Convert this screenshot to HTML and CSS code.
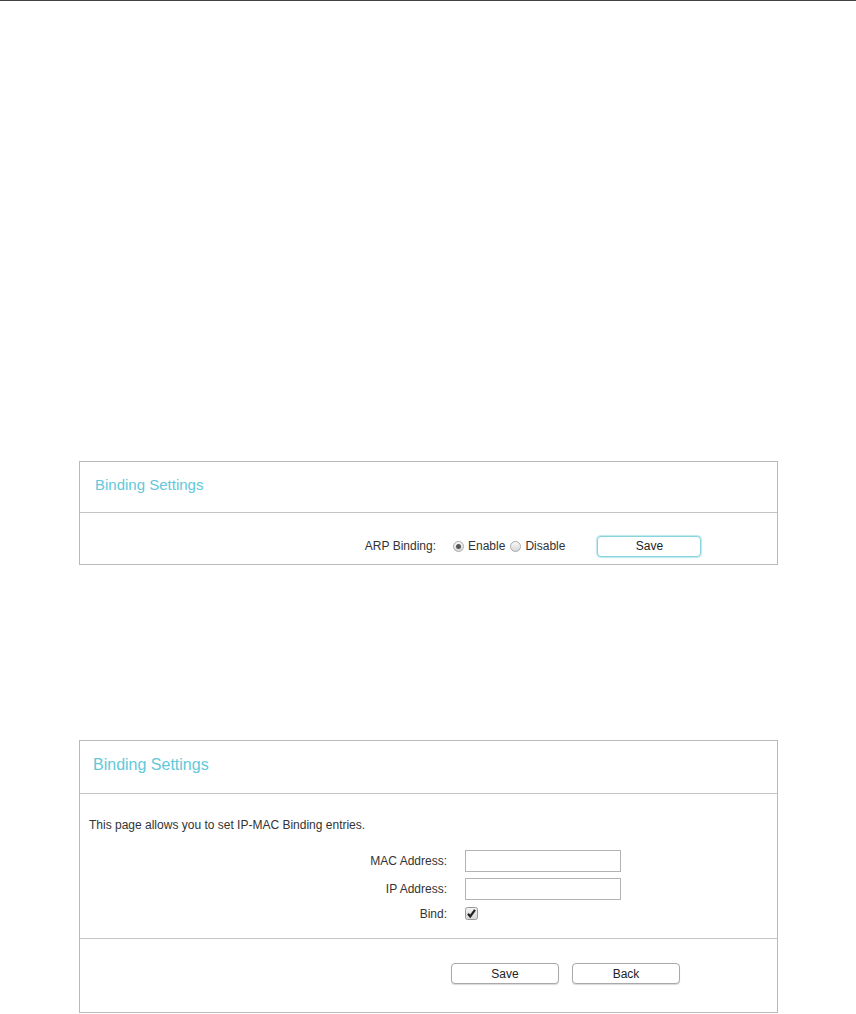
FILE: index.html
```html
<!DOCTYPE html>
<html lang="en">
<head>
  <meta charset="UTF-8">
  <title>Binding Settings</title>
  <link rel="stylesheet" href="styles.css">
</head>
<body>
  <div class="topline"></div>

  <!-- ARP binding switch -->
  <div class="panel panel-arp">
    <div class="panel-head">
      <h2 class="title">Binding Settings</h2>
    </div>
    <div class="panel-body arp-row">
      <span class="label">ARP Binding:</span>
      <span class="radio checked"></span><span class="opt">Enable</span>
      <span class="radio"></span><span class="opt">Disable</span>
      <button class="btn btn-focus">Save</button>
    </div>
  </div>

  <!-- Add entry -->
  <div class="panel panel-entry">
    <div class="panel-head">
      <h2 class="title title-lg">Binding Settings</h2>
    </div>
    <div class="panel-body entry-body">
      <p class="intro">This page allows you to set IP-MAC Binding entries.</p>
      <div class="form">
        <label class="label">MAC Address:</label>
        <input type="text" class="field">
        <label class="label">IP Address:</label>
        <input type="text" class="field">
        <label class="label">Bind:</label>
        <span class="check">
          <svg width="13" height="13" viewBox="0 0 13 13">
            <defs>
              <linearGradient id="cb" x1="0" y1="0" x2="0" y2="1">
                <stop offset="0" stop-color="#f4f4f4"/>
                <stop offset="1" stop-color="#d6d6d6"/>
              </linearGradient>
            </defs>
            <rect x="0.5" y="0.5" width="12" height="12" rx="2" fill="url(#cb)" stroke="#9a9a9a"/>
            <path d="M3 6.8 L5.2 9.4 L10 2.8" fill="none" stroke="#222" stroke-width="2.2"/>
          </svg>
        </span>
      </div>
    </div>
    <div class="panel-foot">
      <button class="btn">Save</button>
      <button class="btn">Back</button>
    </div>
  </div>
</body>
</html>
```

FILE: styles.css
```css
body {
  margin: 0;
  font-family: "Liberation Sans", Arial, sans-serif;
  font-size: 12px;
  color: #333;
  background: #fff;
}
.topline {
  height: 1px;
  background: #444;
}
.panel {
  width: 699px;
  box-sizing: border-box;
  margin-left: 79px;
  border: 1px solid #b9b9b9;
}
.panel-arp {
  margin-top: 460px;
}
.panel-entry {
  margin-top: 175px;
}
.panel-head {
  border-bottom: 1px solid #c4c4c4;
  display: flex;
  align-items: center;
  box-sizing: border-box;
}
.panel-arp .panel-head {
  height: 51px;
  padding: 0 0 5px 15px;
}
.panel-entry .panel-head {
  height: 53px;
  padding: 0 0 5px 13px;
}
.title {
  margin: 0;
  font-weight: normal;
  font-size: 15px;
  color: #62c8da;
}
.title-lg {
  font-size: 16px;
}
.label {
  text-align: right;
}
.arp-row {
  height: 51px;
  box-sizing: border-box;
  display: flex;
  align-items: center;
  padding-top: 15px;
}
.arp-row .label {
  width: 356px;
  margin-right: 17px;
}
.radio {
  width: 9px;
  height: 9px;
  border: 1px solid #aaa;
  border-radius: 50%;
  background: linear-gradient(#f8f8f8, #d8d8d8);
  position: relative;
  margin-right: 4px;
}
.radio.checked::after {
  content: "";
  position: absolute;
  left: 2px;
  top: 2px;
  width: 5px;
  height: 5px;
  border-radius: 50%;
  background: #555;
}
.opt {
  margin-right: 5px;
}
.btn {
  width: 108px;
  height: 21px;
  padding: 0;
  font-family: "Liberation Sans", Arial, sans-serif;
  font-size: 12px;
  color: #222;
  background: #fff;
  border: 1px solid #a9a9a9;
  border-radius: 4px;
  box-shadow: 0 1px 1px rgba(0, 0, 0, 0.15);
}
.btn-focus {
  width: 104px;
  margin-left: 27px;
  border-color: #86d4dd;
  box-shadow: 0 0 1px 1px #bfe8ed;
}
.entry-body {
  border-bottom: 1px solid #c4c4c4;
  height: 145px;
  box-sizing: border-box;
  padding-top: 24px;
}
.intro {
  margin: 0 0 18px 9px;
  line-height: 14px;
}
.form {
  display: grid;
  grid-template-columns: 367px 156px;
  column-gap: 18px;
  row-gap: 6px;
  align-items: center;
}
.field {
  width: 156px;
  height: 22px;
  box-sizing: border-box;
  border: 1px solid #b3b3b3;
  margin: 0;
  padding: 0 4px;
}
.check {
  display: flex;
  height: 15px;
  align-items: center;
}
.panel-foot {
  height: 73px;
  box-sizing: border-box;
  padding: 24px 0 0 371px;
  display: flex;
  gap: 13px;
  align-items: flex-start;
}
```
